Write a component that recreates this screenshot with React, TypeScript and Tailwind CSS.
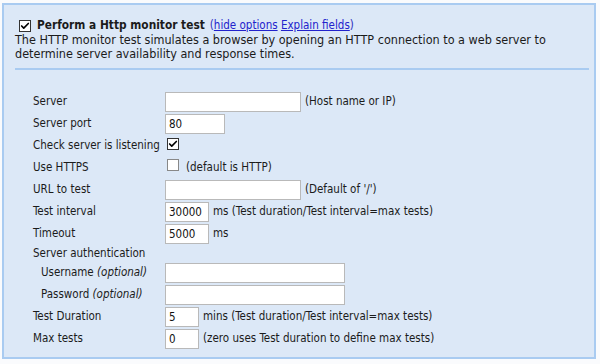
import { Check } from 'lucide-react';

const font = { fontFamily: '"DejaVu Sans Condensed", "DejaVu Sans", Verdana, sans-serif' };

const Box = ({ checked, dark }: { checked?: boolean; dark?: boolean }) => (
    <span
        className={`inline-flex items-center justify-center w-[12px] h-[12px] bg-white border ${dark || checked ? 'border-[#333]' : 'border-[#888]'}`}
    >
        {checked && <Check className="w-[10px] h-[10px] text-black" strokeWidth={4} />}
    </span>
);

const Field = ({ w, value = '' }: { w: string; value?: string }) => (
    <input
        readOnly
        value={value}
        className={`${w} h-[20px] bg-white border border-[#b9b9b9] px-[3px] text-[11.5px] text-[#111] outline-none`}
        style={font}
    />
);

const Row = ({ label, children, indent }: { label: React.ReactNode; children?: React.ReactNode; indent?: boolean }) => (
    <div className="flex items-center h-[22px]">
        <div className={`w-[132px] shrink-0 ${indent ? 'pl-[8px]' : ''}`}>{label}</div>
        <div className="flex items-center gap-[4px]">{children}</div>
    </div>
);

export default function App() {
    return (
        <div className="w-[600px] h-[364px] bg-[#fafbfd] pt-[3px] pl-[2px]" style={font}>
            <div className="w-[594px] h-[356px] bg-[#dce8f7] border-2 border-[#a9cbf1] text-[#1b1b1b]">
                <div className="px-[11px] pt-[14px]">
                    <div className="flex items-center h-[14px] pl-[4px]">
                        <Box checked dark />
                        <span className="ml-[6px] font-bold text-[11.8px]">Perform a Http monitor test</span>
                        <span className="ml-[5px] text-[11.5px] text-[#2d2dbd]">
                            (<a className="underline text-[#2222cc]">hide options</a>{' '}
                            <a className="underline text-[#2222cc]">Explain fields</a>)
                        </span>
                    </div>
                    <p className="text-[12.5px] leading-[14px]">
                        The HTTP monitor test simulates a browser by opening an HTTP connection to a web server to
                        determine server availability and response times.
                    </p>
                    <div className="mt-[7px] h-[2px] bg-[#a9cbf1] w-[574px]" />
                </div>

                <div className="pl-[29px] pt-[21px] text-[11.5px]">
                    <Row label="Server">
                        <Field w="w-[136px]" />
                        <span>(Host name or IP)</span>
                    </Row>
                    <Row label="Server port">
                        <Field w="w-[60px]" value="80" />
                    </Row>
                    <Row label="Check server is listening">
                        <span className="pl-[2px]"><Box checked /></span>
                    </Row>
                    <Row label="Use HTTPS">
                        <span className="pl-[2px] pr-[3px]"><Box /></span>
                        <span>(default is HTTP)</span>
                    </Row>
                    <Row label="URL to test">
                        <Field w="w-[136px]" />
                        <span>(Default of '/')</span>
                    </Row>
                    <Row label="Test interval">
                        <Field w="w-[44px]" value="30000" />
                        <span>ms (Test duration/Test interval=max tests)</span>
                    </Row>
                    <Row label="Timeout">
                        <Field w="w-[44px]" value="5000" />
                        <span>ms</span>
                    </Row>
                    <div className="h-[17px] flex items-center">Server authentication</div>
                    <Row indent label={<>Username <i>(optional)</i></>}>
                        <Field w="w-[180px]" />
                    </Row>
                    <Row indent label={<>Password <i>(optional)</i></>}>
                        <Field w="w-[180px]" />
                    </Row>
                    <Row label="Test Duration">
                        <Field w="w-[34px]" value="5" />
                        <span>mins (Test duration/Test interval=max tests)</span>
                    </Row>
                    <Row label="Max tests">
                        <Field w="w-[34px]" value="0" />
                        <span>(zero uses Test duration to define max tests)</span>
                    </Row>
                </div>
            </div>
        </div>
    );
}
